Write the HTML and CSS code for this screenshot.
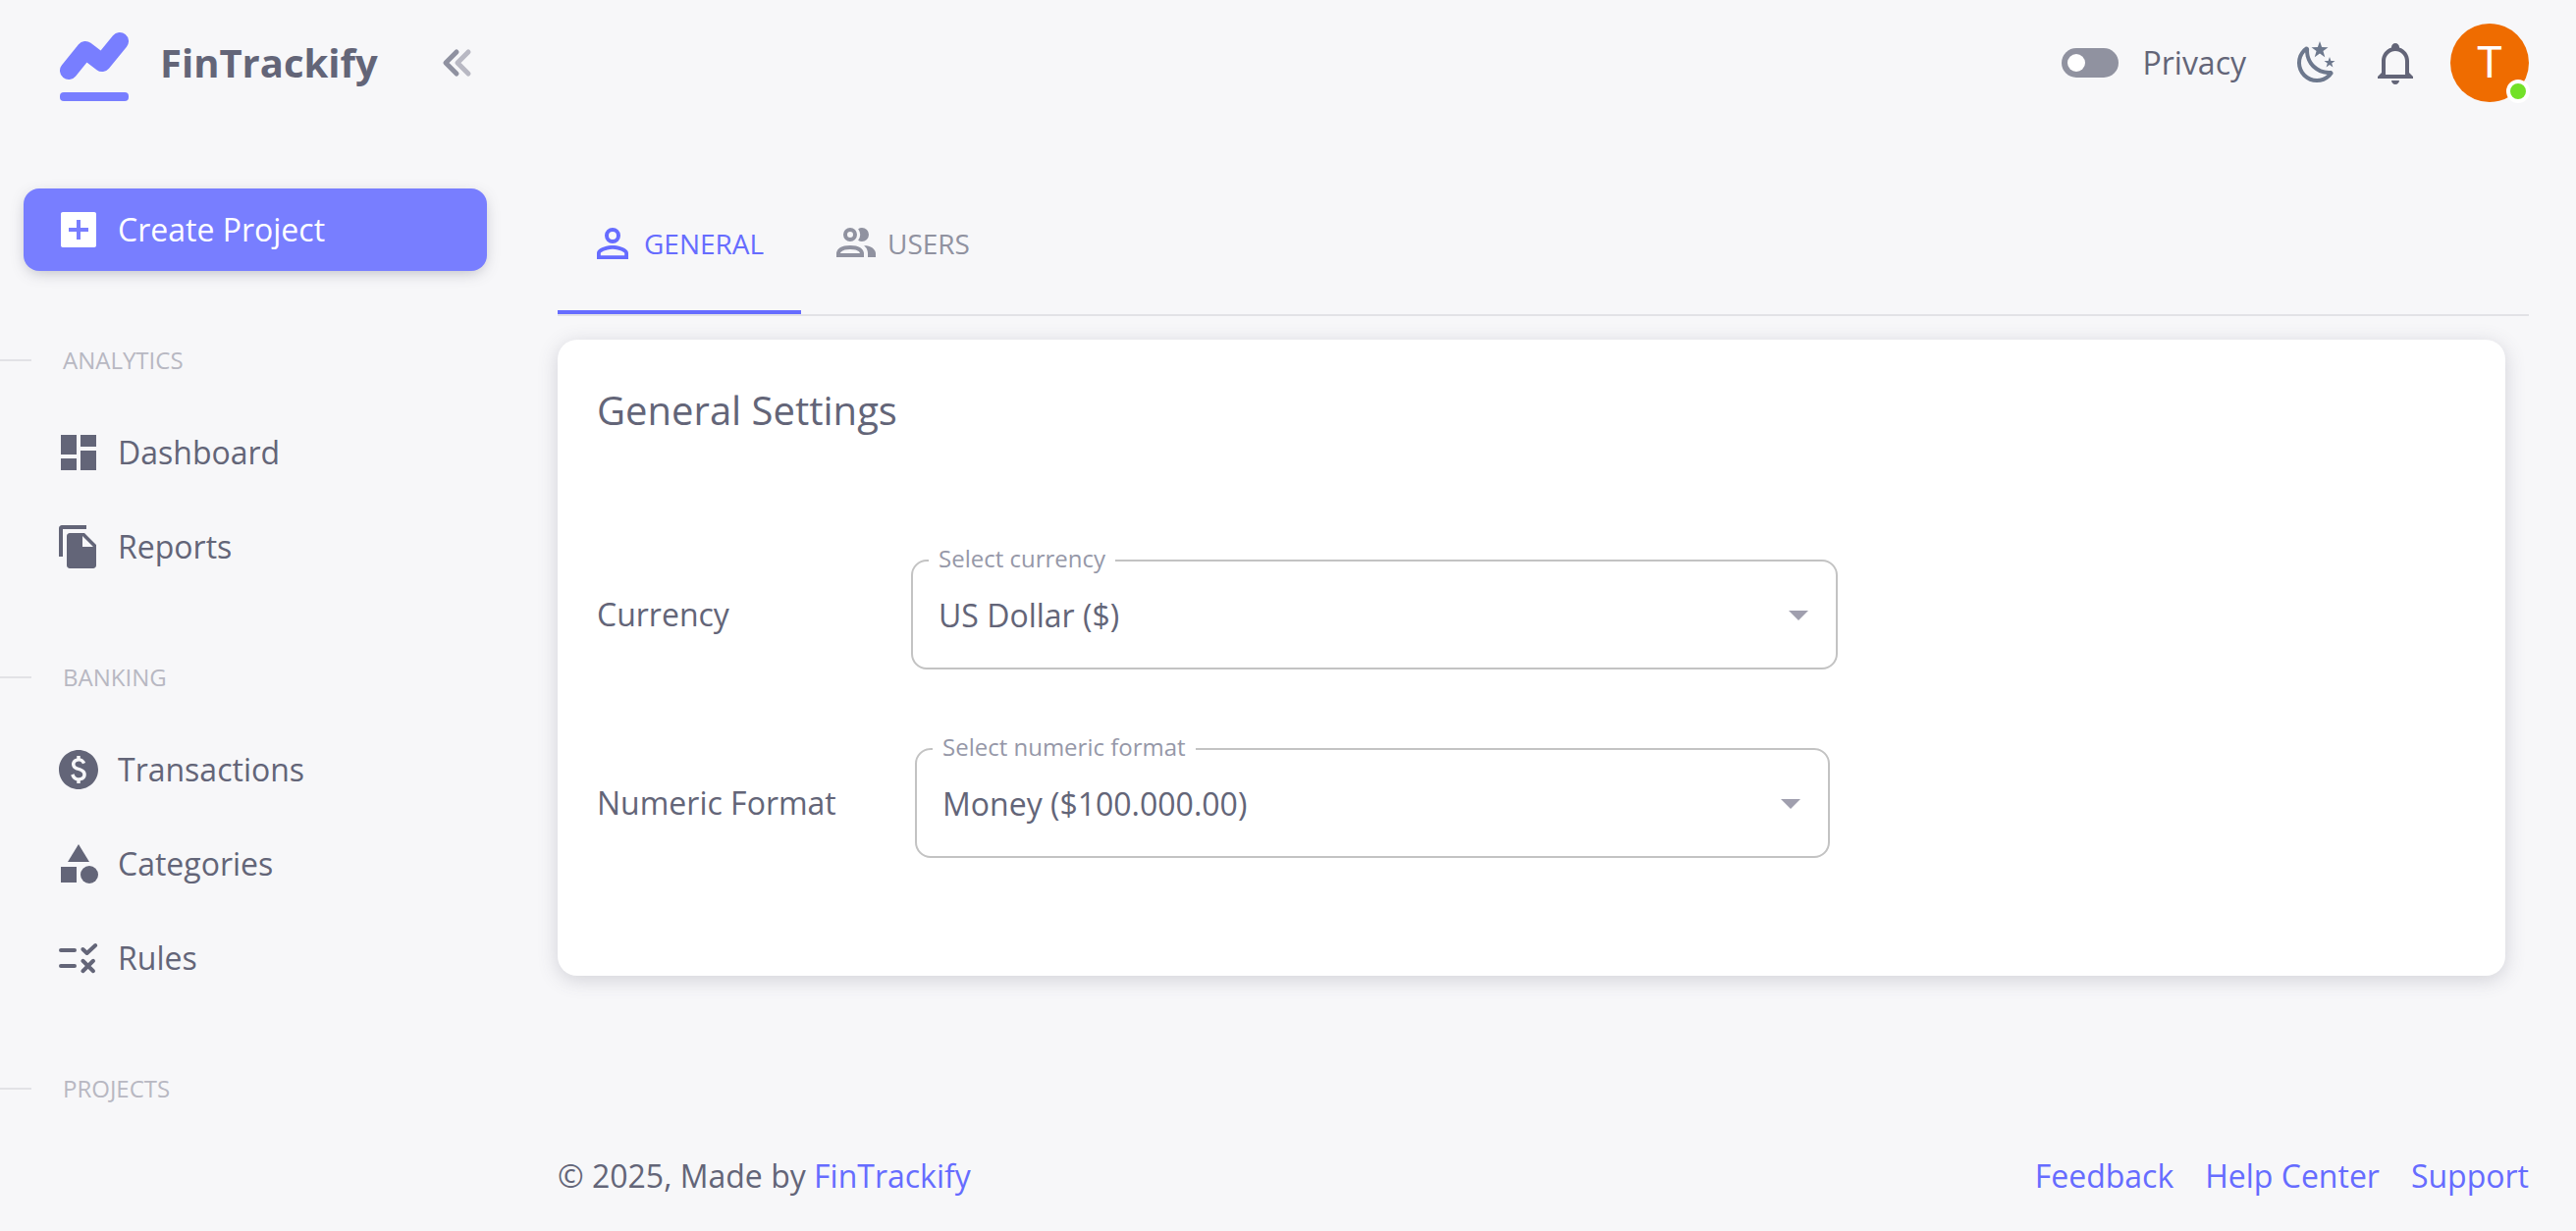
FILE: index.html
```html
<!DOCTYPE html>
<html lang="en">
<head>
    <meta charset="UTF-8">
    <meta name="viewport" content="width=device-width, initial-scale=1.0">
    <title>FinTrackify - Settings</title>
    <link rel="stylesheet" href="styles.css">
</head>
<body>
    <div class="layout">
        <!-- Sidebar -->
        <aside class="sidebar">
            <div class="brand">
                <a href="#" class="brand-link">
                    <svg class="brand-logo" viewBox="0 -8 70 78" aria-hidden="true">
                        <path d="M9 39 L26 18 L43 31 L61 9" fill="none" stroke="#787eff" stroke-width="18" stroke-linecap="round" stroke-linejoin="round"/>
                        <rect x="0" y="61" width="70" height="9" rx="4" fill="#787eff"/>
                    </svg>
                    <span class="brand-name">FinTrackify</span>
                </a>
                <button type="button" class="icon-button" aria-label="Collapse menu">
                    <svg class="collapse-icon" viewBox="0 0 48 48" aria-hidden="true">
                        <path d="M21 13 L10 24 L21 35" stroke="#8f91a0"/>
                        <path d="M33 13 L22 24 L33 35" stroke="#b8b8c3"/>
                    </svg>
                </button>
            </div>

            <nav class="menu">
                <a href="#" class="menu-item menu-item-primary">
                    <svg class="icon" viewBox="0 0 24 24" aria-hidden="true"><path d="M20 3H4c-.6 0-1 .4-1 1v16c0 .6.4 1 1 1h16c.6 0 1-.4 1-1V4c0-.6-.4-1-1-1zm-3 10h-4v4h-2v-4H7v-2h4V7h2v4h4v2z"/></svg>
                    Create Project
                </a>

                <h2 class="menu-section">Analytics</h2>
                <a href="#" class="menu-item">
                    <svg class="icon" viewBox="0 0 24 24" aria-hidden="true"><path d="M3 13h8V3H3v10zm0 8h8v-6H3v6zm10 0h8V11h-8v10zm0-18v6h8V3h-8z"/></svg>
                    Dashboard
                </a>
                <a href="#" class="menu-item">
                    <svg class="icon" viewBox="0 0 24 24" aria-hidden="true"><path d="M16 1H3.500C2.700 1 2 1.700 2 2.500V17h2V3h12V1zm-1 4l6 6v10.500c0 .8-.7 1.500-1.500 1.500h-12C6.700 23 6 22.300 6 21.500v-15C6 5.700 6.700 5 7.500 5H15zm-1 7h5.500L14 6.500V12z"/></svg>
                    Reports
                </a>

                <h2 class="menu-section">Banking</h2>
                <a href="#" class="menu-item">
                    <svg class="icon" viewBox="0 0 24 24" aria-hidden="true"><path d="M12 2C6.480 2 2 6.480 2 12s4.480 10 10 10 10-4.480 10-10S17.520 2 12 2zM12.880 17.760V19h-1.750v-1.290c-.74-.18-2.390-.77-3.020-2.960l1.650-.67c.06.22.58 2.090 2.400 2.090.93 0 1.980-.48 1.980-1.610 0-.96-.7-1.460-2.280-2.030-1.100-.39-3.350-1.030-3.350-3.310 0-.1.010-2.400 2.620-2.960V5h1.750v1.240c1.840.32 2.510 1.790 2.660 2.230l-1.580.67c-.11-.35-.59-1.340-1.900-1.340-.7 0-1.810.37-1.810 1.390 0 .95.86 1.310 2.640 1.900 2.400.83 3.010 2.050 3.010 3.450 0 2.630-2.500 3.130-3.020 3.220z"/></svg>
                    Transactions
                </a>
                <a href="#" class="menu-item">
                    <svg class="icon" viewBox="0 0 24 24" aria-hidden="true"><path d="M12 2l-5.500 9h11z"/><circle cx="17.500" cy="17.500" r="4.500"/><path d="M3 13.500h8v8H3z"/></svg>
                    Categories
                </a>
                <a href="#" class="menu-item">
                    <svg class="icon icon-stroke" viewBox="0 0 24 24" aria-hidden="true"><path d="M3 8h7M3 16h7M14.200 7.500l2.100 2 4.300-4M14.200 13.400l5.300 5.200M19.500 13.400l-5.300 5.200"/></svg>
                    Rules
                </a>

                <h2 class="menu-section">Projects</h2>
            </nav>
        </aside>

        <div class="page">
            <!-- Top bar -->
            <header class="topbar">
                <label class="privacy">
                    <input type="checkbox" class="switch" role="switch">
                    Privacy
                </label>
                <button type="button" class="icon-button icon-button-mode" aria-label="Dark mode">
                    <svg class="icon" viewBox="0 0 24 24" aria-hidden="true"><path d="M17.750 4.090L15.220 6.030L16.130 9.090L13.500 7.280L10.870 9.090L11.780 6.030L9.250 4.090L12.440 4L13.500 1L14.560 4L17.750 4.090M21.250 11L19.610 12.250L20.200 14.230L18.500 13.060L16.800 14.230L17.390 12.250L15.750 11L17.810 10.950L18.500 9L19.190 10.950L21.250 11M18.970 15.950C19.800 15.870 20.690 17.050 20.160 17.800C19.840 18.250 19.500 18.670 19.080 19.070C15.170 23 8.840 23 4.940 19.070C1.030 15.170 1.030 8.830 4.940 4.930C5.340 4.530 5.760 4.170 6.210 3.850C6.960 3.320 8.140 4.210 8.060 5.040C7.790 7.900 8.750 10.870 10.950 13.060C13.140 15.260 16.100 16.220 18.970 15.950M17.330 17.970C14.500 17.810 11.700 16.640 9.530 14.500C7.360 12.310 6.200 9.500 6.040 6.680C3.230 9.820 3.340 14.640 6.350 17.660C9.370 20.670 14.190 20.780 17.330 17.970Z"/></svg>
                </button>
                <button type="button" class="icon-button" aria-label="Notifications">
                    <svg class="icon" viewBox="0 0 24 24" aria-hidden="true"><path d="M10 21H14C14 22.100 13.100 23 12 23S10 22.100 10 21M21 19V20H3V19L5 17V11C5 7.900 7.030 5.170 10 4.290V4C10 2.900 10.900 2 12 2S14 2.900 14 4V4.290C16.970 5.170 19 7.900 19 11V17L21 19M17 11C17 8.240 14.760 6 12 6S7 8.240 7 11V18H17V11Z"/></svg>
                </button>
                <button type="button" class="avatar" aria-label="Account">
                    T
                    <span class="avatar-status"></span>
                </button>
            </header>

            <main class="content">
                <div class="tabs" role="tablist">
                    <button type="button" class="tab tab-active" role="tab" aria-selected="true">
                        <svg class="icon" viewBox="0 0 24 24" aria-hidden="true"><path d="M12 4A4 4 0 0 1 16 8A4 4 0 0 1 12 12A4 4 0 0 1 8 8A4 4 0 0 1 12 4M12 6A2 2 0 0 0 10 8A2 2 0 0 0 12 10A2 2 0 0 0 14 8A2 2 0 0 0 12 6M12 13C14.670 13 20 14.330 20 17V20H4V17C4 14.330 9.330 13 12 13M12 14.900C9.030 14.900 5.900 16.360 5.900 17V18.100H18.100V17C18.100 16.360 14.970 14.900 12 14.900Z"/></svg>
                        General
                    </button>
                    <button type="button" class="tab" role="tab" aria-selected="false">
                        <svg class="icon" viewBox="0 0 24 24" aria-hidden="true"><path d="M13.070 10.410A5 5 0 0 0 13.070 4.590A3.390 3.390 0 0 1 15 4A3.500 3.500 0 0 1 15 11A3.390 3.390 0 0 1 13.070 10.410M5.500 7.500A3.500 3.500 0 1 1 9 11A3.500 3.500 0 0 1 5.500 7.500M7.500 7.500A1.500 1.500 0 1 0 9 6A1.500 1.500 0 0 0 7.500 7.500M16 17V19H2V17S2 13 9 13 16 17 16 17M14 17C13.860 16.220 12.670 15 9 15S4.070 16.310 4 17M15.950 13A5.320 5.320 0 0 1 18 17V19H22V17S22 13.370 15.940 13Z"/></svg>
                        Users
                    </button>
                </div>

                <section class="card">
                    <h1 class="card-title">General Settings</h1>
                    <form class="settings">
                        <div class="setting">
                            <span class="setting-name">Currency</span>
                            <div class="field field-currency">
                                <label for="currency">Select currency</label>
                                <select id="currency">
                                    <option>US Dollar ($)</option>
                                </select>
                                <svg class="field-arrow" viewBox="0 0 24 24" aria-hidden="true"><path d="M7 10l5 5 5-5z"/></svg>
                            </div>
                        </div>
                        <div class="setting">
                            <span class="setting-name">Numeric Format</span>
                            <div class="field field-format">
                                <label for="numericFormat">Select numeric format</label>
                                <select id="numericFormat">
                                    <option>Money ($100.000.00)</option>
                                </select>
                                <svg class="field-arrow" viewBox="0 0 24 24" aria-hidden="true"><path d="M7 10l5 5 5-5z"/></svg>
                            </div>
                        </div>
                    </form>
                </section>
            </main>

            <footer class="footer">
                <p>© 2025, Made by <a href="#">FinTrackify</a></p>
                <nav class="footer-links">
                    <a href="#">Feedback</a>
                    <a href="#">Help Center</a>
                    <a href="#">Support</a>
                </nav>
            </footer>
        </div>
    </div>
</body>
</html>
```

FILE: styles.css
```css
* {
    box-sizing: border-box;
}
body {
    margin: 0;
    background-color: #f7f7f9;
    color: #636578;
    font-family: "Open Sans", sans-serif;
    font-size: 32px;
    line-height: 48px;
}
h1, h2, p {
    margin: 0;
}
a {
    color: #666cff;
    text-decoration: none;
}
button {
    padding: 0;
    border: none;
    background: none;
    color: inherit;
    font-family: inherit;
    cursor: pointer;
}
.layout {
    display: flex;
    min-height: 100vh;
}
.icon {
    display: block;
    flex: none;
    width: 48px;
    height: 48px;
    fill: currentColor;
}
.icon-stroke {
    fill: none;
    stroke: currentColor;
    stroke-width: 2;
    stroke-linecap: round;
    stroke-linejoin: round;
}

/* Sidebar */
.sidebar {
    flex: none;
    width: 520px;
}
.brand {
    display: flex;
    align-items: center;
    justify-content: space-between;
    height: 128px;
    padding: 0 28px 0 61px;
}
.brand-link {
    display: flex;
    align-items: center;
    gap: 32px;
    color: #636578;
}
.brand-logo {
    width: 70px;
    height: 78px;
}
.brand-name {
    font-size: 40px;
    font-weight: 700;
}
.collapse-icon {
    display: block;
    width: 48px;
    height: 48px;
    fill: none;
    stroke-width: 5;
    stroke-linecap: round;
    stroke-linejoin: round;
}
.menu {
    display: flex;
    flex-direction: column;
    gap: 12px;
    padding: 64px 24px 0 0;
}
.menu-item {
    display: flex;
    align-items: center;
    gap: 16px;
    height: 84px;
    padding-left: 32px;
    margin-left: 24px;
    border-radius: 16px;
    color: #636578;
}
.menu-item-primary {
    background-color: #787eff;
    color: white;
    box-shadow: 0 4px 16px -4px rgba(76, 78, 100, 0.42);
}
.menu-section {
    display: flex;
    align-items: center;
    gap: 32px;
    height: 40px;
    margin: 59px 0 20px;
    color: #b8b8c2;
    font-size: 24px;
    font-weight: 400;
    text-transform: uppercase;
}
.menu-section::before {
    content: "";
    width: 32px;
    height: 2px;
    background-color: #e2e2e6;
}

/* Top bar */
.page {
    display: flex;
    flex: 1;
    flex-direction: column;
    min-width: 0;
    padding: 0 48px;
}
.topbar {
    display: flex;
    align-items: center;
    justify-content: flex-end;
    height: 128px;
}
.topbar .icon-button {
    margin-right: 32px;
}
.topbar .icon-button-mode {
    color: #6d788d;
}
.privacy {
    display: flex;
    align-items: center;
    gap: 24px;
    margin-right: 48px;
    cursor: pointer;
}
.switch {
    appearance: none;
    display: flex;
    align-items: center;
    width: 58px;
    height: 30px;
    margin: 0;
    padding: 0 6px;
    border-radius: 15px;
    background-color: #9092a0;
}
.switch::before {
    content: "";
    width: 18px;
    height: 18px;
    border-radius: 50%;
    background-color: white;
}
.switch:checked {
    justify-content: flex-end;
    background-color: #666cff;
}
.avatar {
    position: relative;
    width: 80px;
    height: 80px;
    border-radius: 50%;
    background-color: #ef6c00;
    color: white;
    font-family: Roboto, sans-serif;
    font-size: 44px;
    line-height: 80px;
}
.avatar-status {
    position: absolute;
    right: -1px;
    bottom: -1px;
    width: 24px;
    height: 24px;
    border: 4px solid white;
    border-radius: 50%;
    background-color: #72e128;
}

/* Tabs */
.content {
    flex: 1;
    padding-top: 48px;
}
.tabs {
    display: flex;
    border-bottom: 2px solid #e2e2e6;
}
.tab {
    display: flex;
    align-items: center;
    gap: 8px;
    min-width: 248px;
    height: 144px;
    padding: 0 32px;
    border-top: 4px solid transparent;
    border-bottom: 4px solid transparent;
    color: #9092a0;
    font-size: 28px;
    font-weight: 500;
    text-transform: uppercase;
}
.tab-active {
    border-bottom-color: #666cff;
    color: #666cff;
}

/* Settings card */
.card {
    margin: 24px 24px 0 0;
    padding: 40px 40px 120px;
    border-radius: 20px;
    background-color: white;
    box-shadow: 0 4px 20px rgba(76, 78, 100, 0.22);
}
.card-title {
    font-size: 40px;
    font-weight: 500;
    line-height: 64px;
}
.settings {
    display: flex;
    flex-direction: column;
    gap: 80px;
    margin-top: 120px;
}
.setting {
    display: flex;
    align-items: center;
}
.setting-name {
    flex: none;
    width: 320px;
    font-weight: 500;
}
.field {
    position: relative;
}
.field-currency {
    width: 944px;
}
.field-format {
    width: 932px;
    margin-left: 4px;
}
.field label {
    position: absolute;
    top: -19px;
    left: 18px;
    padding: 0 10px;
    background-color: white;
    color: #9698a8;
    font-size: 24px;
    line-height: 36px;
}
.field select {
    appearance: none;
    display: block;
    width: 100%;
    height: 112px;
    padding: 0 64px 0 26px;
    border: 2px solid #c3c3c3;
    border-radius: 16px;
    background-color: white;
    color: #636578;
    font-family: inherit;
    font-size: 32px;
}
.field-arrow {
    position: absolute;
    top: 32px;
    right: 16px;
    width: 48px;
    height: 48px;
    fill: #a09fae;
    pointer-events: none;
}

/* Footer */
.footer {
    display: flex;
    justify-content: space-between;
    padding-bottom: 32px;
}
.footer-links {
    display: flex;
    gap: 32px;
}
```
